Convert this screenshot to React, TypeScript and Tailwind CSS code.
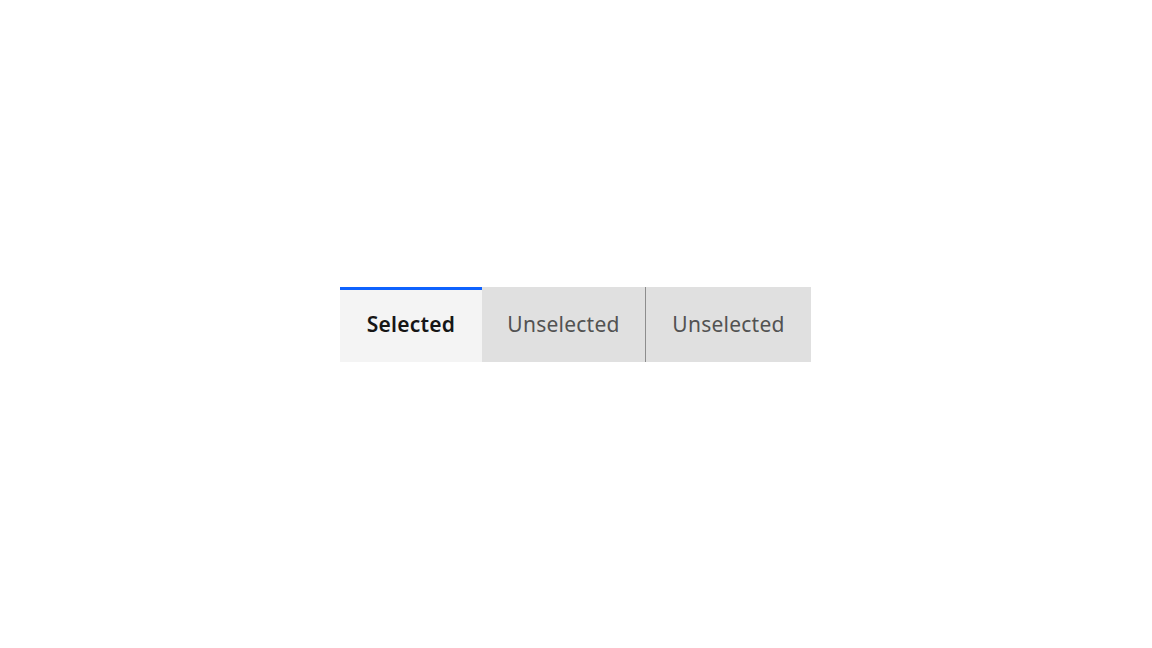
import React from "react";

const tabs = [
  { label: "Selected", width: "w-[142px]" },
  { label: "Unselected", width: "w-[163px]" },
  { label: "Unselected", width: "w-[166px]" },
];

export default function App() {
  const selected = 0;
  return (
    <main className="flex h-[648px] w-full items-center justify-center bg-white pr-px font-['Noto_Sans',sans-serif]">
      <div className="flex h-[75px]">
        {tabs.map((t, i) => {
          const isSel = i === selected;
          const showDivider = i > 0 && i - 1 !== selected && !isSel;
          return (
            <button
              key={i}
              className={`${t.width} flex h-full items-center justify-center pt-px text-[21px] tracking-[0.24px] ${
                isSel
                  ? "border-t-[3px] border-[#0f62fe] bg-[#f4f4f4] pb-[2px] font-semibold text-[#161616]"
                  : "bg-[#e0e0e0] text-[#525252]"
              } ${showDivider ? "border-l border-[#8d8d8d]" : ""}`}
            >
              {t.label}
            </button>
          );
        })}
      </div>
    </main>
  );
}
